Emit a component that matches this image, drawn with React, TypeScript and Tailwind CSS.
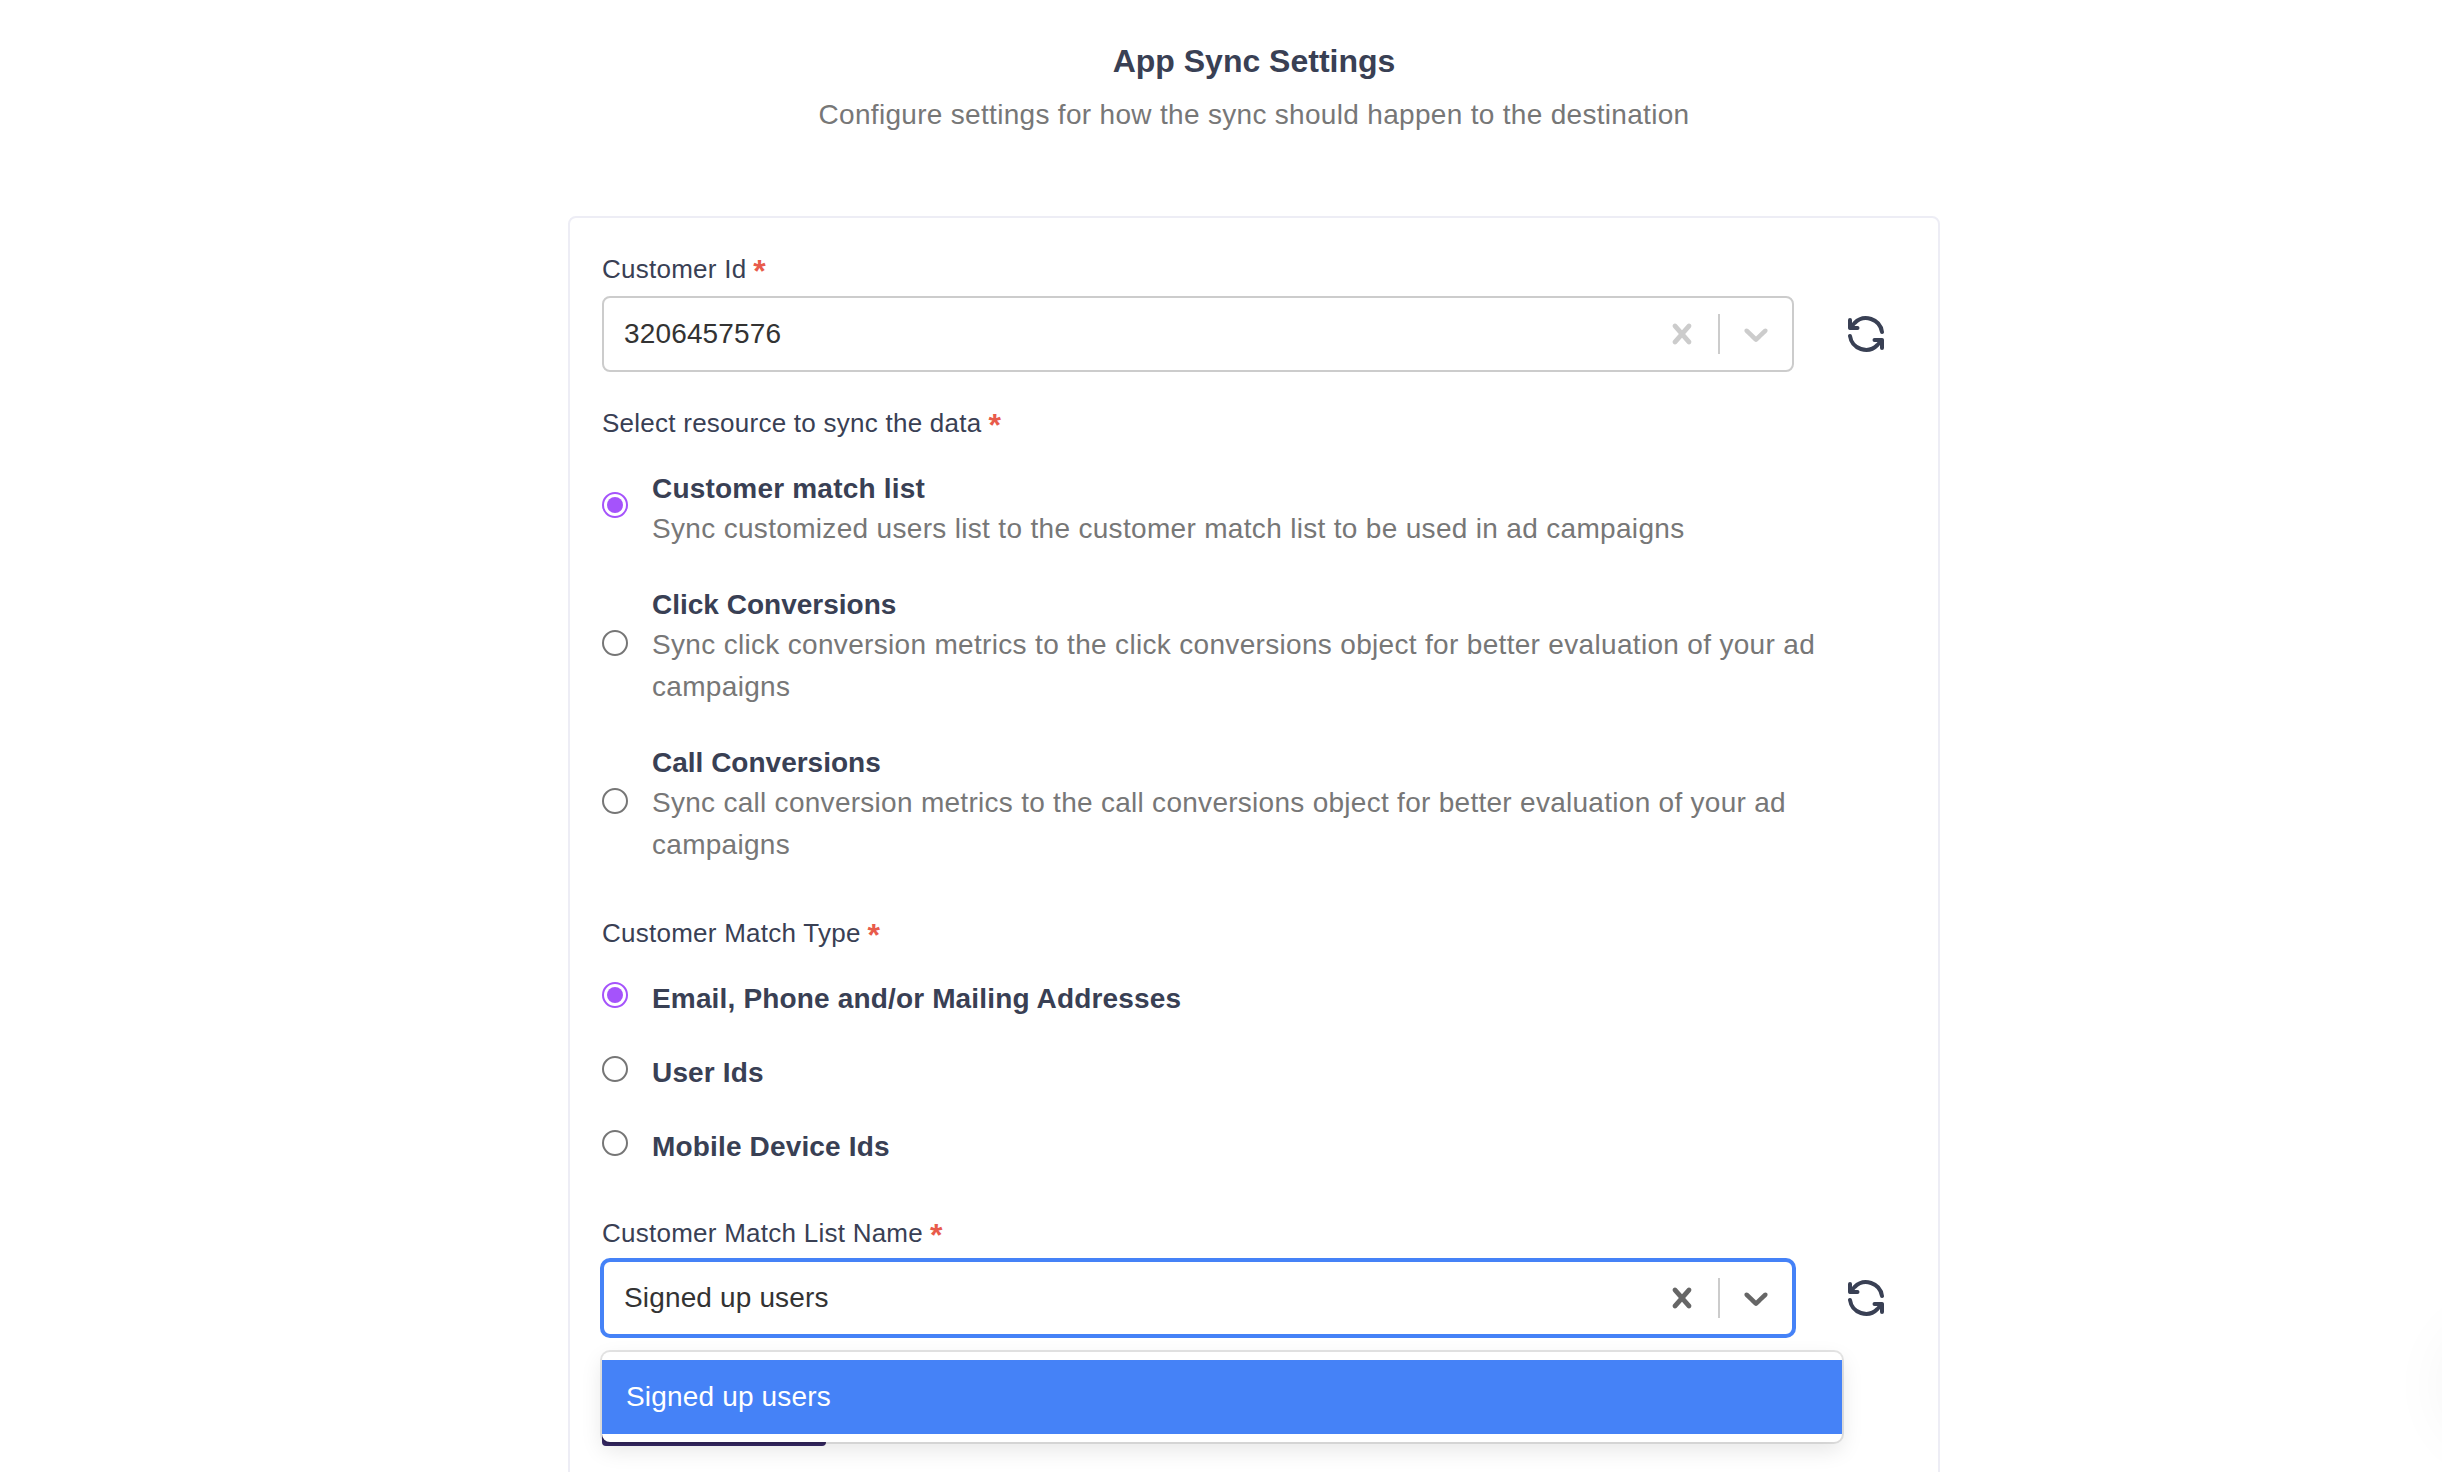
import React from "react";

function Required() {
  return (
    <span className="relative top-[1.5px] ml-[7px] text-[32px] font-bold leading-10 tracking-normal text-[#e85b4b]">*</span>
  );
}

function FieldLabel({ text }: { text: string }) {
  return (
    <div className="flex h-10 items-center text-[26px] leading-10 text-[#394054]">
      <span className="tracking-[0.25px]">{text}</span>
      <Required />
    </div>
  );
}

function RefreshIcon() {
  return (
    <svg
      className="ml-[54px] h-9 w-9 shrink-0"
      viewBox="0 0 36 36"
      fill="none"
      stroke="#394054"
      strokeWidth="4"
      strokeLinecap="round"
      strokeLinejoin="round"
    >
      <path d="M34 16A16.1 16.1 0 0 0 6.6 7L2.400 11.500" />
      <path d="M2 20A16.1 16.1 0 0 0 29.400 29L33.600 24.500" />
      <path d="M2 4v8h7.500" />
      <path d="M34 32v-8h-7.500" />
    </svg>
  );
}

function Select({ value, focused }: { value: string; focused?: boolean }) {
  return (
    <div
      className={
        focused
          ? "flex h-[76px] w-[1192px] items-center rounded-lg border-2 border-[#4582f7] bg-white shadow-[0_0_0_2px_#4582f7]"
          : "flex h-[76px] w-[1192px] items-center rounded-lg border-2 border-[#cccccc] bg-white"
      }
    >
      <span className="flex-1 pl-5 text-[28px] leading-8 tracking-[0.15px] text-[#333333]">{value}</span>
      <span className={focused ? "flex items-center text-[#666666]" : "flex items-center text-[#cccccc]"}>
        <span className="p-4">
          <svg className="size-10" viewBox="0 0 20 20" fill="currentColor">
            <path d="M14.348 14.849c-0.469 0.469-1.229 0.469-1.697 0l-2.651-3.030-2.651 3.029c-0.469 0.469-1.229 0.469-1.697 0-0.469-0.469-0.469-1.229 0-1.697l2.758-3.15-2.759-3.152c-0.469-0.469-0.469-1.228 0-1.697s1.228-0.469 1.697 0l2.652 3.031 2.651-3.031c0.469-0.469 1.228-0.469 1.697 0s0.469 1.229 0 1.697l-2.758 3.152 2.758 3.15c0.469 0.469 0.469 1.229 0 1.698z" />
          </svg>
        </span>
        <span className="h-10 w-0.5 bg-[#cccccc]" />
        <span className="p-4">
          <svg className="size-10" viewBox="0 0 20 20" fill="currentColor">
            <path d="M4.516 7.548c0.436-0.446 1.043-0.481 1.576 0l3.908 3.747 3.908-3.747c0.533-0.481 1.141-0.446 1.574 0 0.436 0.445 0.408 1.197 0 1.615-0.406 0.418-4.695 4.502-4.695 4.502-0.217 0.223-0.502 0.335-0.787 0.335s-0.570-0.112-0.789-0.335c0 0-4.287-4.084-4.695-4.502s-0.436-1.170 0-1.615z" />
          </svg>
        </span>
      </span>
    </div>
  );
}

function Radio({ checked }: { checked?: boolean }) {
  return checked ? (
    <span className="flex size-[26px] shrink-0 items-center justify-center rounded-full border-2 border-[#a553fb] bg-white">
      <span className="size-4 rounded-full bg-[#a553fb]" />
    </span>
  ) : (
    <span className="size-[26px] shrink-0 rounded-full border-2 border-[#767676] bg-white" />
  );
}

function Resource({
  title,
  lines,
  checked,
  tracking = "tracking-normal",
  lineTracking = "tracking-[0.32px]",
}: {
  title: string;
  lines: string[];
  checked?: boolean;
  tracking?: string;
  lineTracking?: string;
}) {
  return (
    <div className="flex items-center gap-6">
      <div className={checked ? "flex" : "mt-0.5 flex"}>
        <Radio checked={checked} />
      </div>
      <div className="-mb-1 pt-1.5">
        <div className={`h-[38px] text-[28px] font-bold leading-[38px] text-[#394054] ${tracking}`}>{title}</div>
        {lines.map((line) => (
          <div
            key={line}
            className={`h-[42px] whitespace-nowrap text-[28px] leading-[42px] text-[#777777] ${lineTracking}`}
          >
            {line}
          </div>
        ))}
      </div>
    </div>
  );
}

function MatchType({ title, checked }: { title: string; checked?: boolean }) {
  return (
    <div className="flex h-[74px] gap-6">
      <Radio checked={checked} />
      <span className="text-[28px] font-bold leading-[33px] tracking-[0.16px] text-[#394054]">{title}</span>
    </div>
  );
}

export default function App() {
  return (
    <div className="relative h-[1472px] w-[2442px] overflow-hidden bg-white font-['Liberation_Sans',Arial,sans-serif]">
      <main className="ml-[568px] w-[1372px]">
        <header className="h-[216px] pt-10 text-center">
          <h1 className="text-[32px] font-bold leading-[42px] text-[#394054]">App Sync Settings</h1>
          <p className="mt-3 text-[28px] leading-[41px] tracking-[0.31px] text-[#777777]">
            Configure settings for how the sync should happen to the destination
          </p>
        </header>

        <section className="h-[1400px] rounded-lg border-2 border-[#ededf5] px-8 pt-[31px]">
          <FieldLabel text="Customer Id" />
          <div className="mt-[7px] flex items-center">
            <Select value="3206457576" />
            <RefreshIcon />
          </div>

          <div className="mt-[31px]">
            <FieldLabel text="Select resource to sync the data" />
          </div>
          <div className="mt-[21px] flex flex-col gap-[34px]">
            <Resource
              checked
              title="Customer match list"
              tracking="tracking-[0.2px]"
              lines={["Sync customized users list to the customer match list to be used in ad campaigns"]}
            />
            <Resource
              title="Click Conversions"
              lines={[
                "Sync click conversion metrics to the click conversions object for better evaluation of your ad",
                "campaigns",
              ]}
            />
            <Resource
              title="Call Conversions"
              lineTracking="tracking-[0.28px]"
              lines={[
                "Sync call conversion metrics to the call conversions object for better evaluation of your ad",
                "campaigns",
              ]}
            />
          </div>

          <div className="mt-[51px]">
            <FieldLabel text="Customer Match Type" />
          </div>
          <div className="mt-[29px]">
            <MatchType checked title="Email, Phone and/or Mailing Addresses" />
            <MatchType title="User Ids" />
            <MatchType title="Mobile Device Ids" />
          </div>

          <div className="mt-[9px]">
            <FieldLabel text="Customer Match List Name" />
          </div>
          <div className="relative mt-[7px]">
            <div className="flex items-center">
              <Select focused value="Signed up users" />
              <RefreshIcon />
            </div>
            <div className="absolute left-0 top-[92px] z-10 w-[1240px] rounded-lg bg-white py-2 shadow-[0_0_0_2px_rgba(0,0,0,0.1),0_8px_22px_rgba(0,0,0,0.1)]">
              <div className="h-[74px] bg-[#4582f7] px-6 text-[28px] leading-[74px] tracking-[0.17px] text-white">
                Signed up users
              </div>
            </div>
          </div>
          <div className="mt-[30px] h-20 w-[224px] rounded bg-[#352863]" />
        </section>
      </main>
      <div className="absolute left-[2444px] top-[1323px] size-[120px] rounded-full shadow-[0_2px_64px_rgba(0,0,0,0.05)]" />
    </div>
  );
}
